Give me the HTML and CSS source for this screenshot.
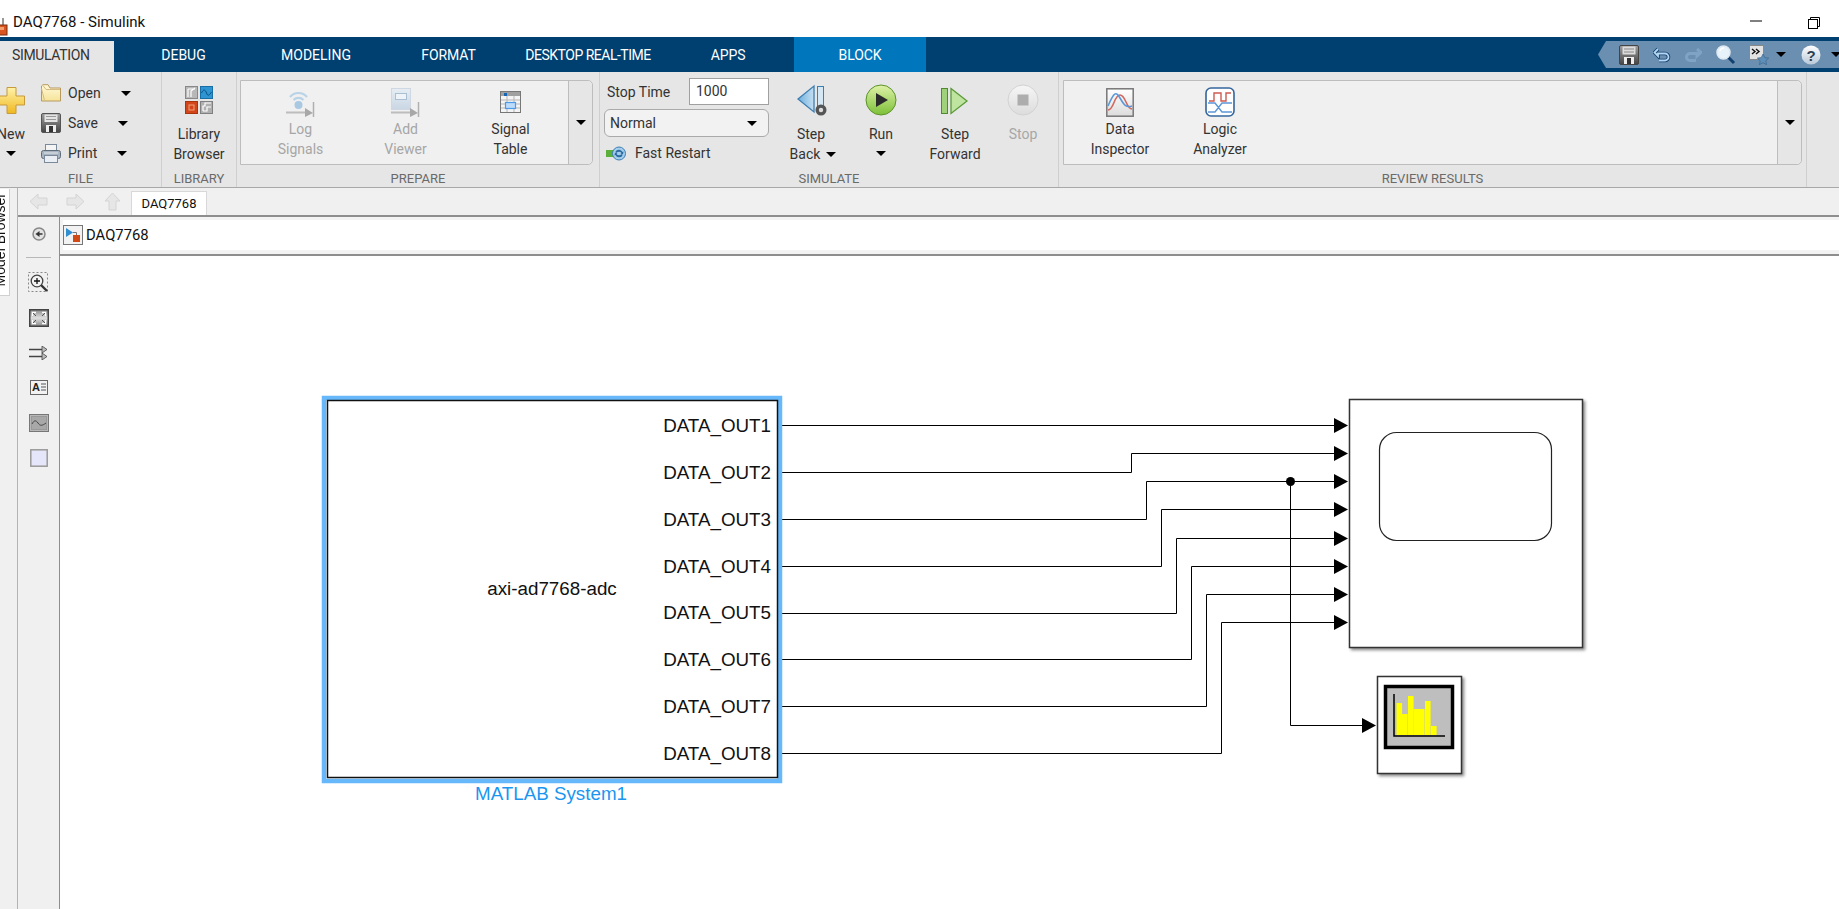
FILE: index.html
```html
<!DOCTYPE html>
<html lang="en">
<head>
<meta charset="utf-8">
<title>DAQ7768 - Simulink</title>
<link rel="stylesheet" href="styles.css">
</head>
<body>
<svg class="defs" width="0" height="0" aria-hidden="true">
  <defs>
    <linearGradient id="gold" x1="0" y1="0" x2="0" y2="1"><stop offset="0" stop-color="#fff3a8"/><stop offset="1" stop-color="#f0b820"/></linearGradient>
    <linearGradient id="folder" x1="0" y1="0" x2="0" y2="1"><stop offset="0" stop-color="#fff8d8"/><stop offset="1" stop-color="#f6e49a"/></linearGradient>
    <linearGradient id="disk" x1="0" y1="0" x2="0" y2="1"><stop offset="0" stop-color="#a0a0a0"/><stop offset="1" stop-color="#454545"/></linearGradient>
    <linearGradient id="green" x1="0" y1="0" x2="0" y2="1"><stop offset="0" stop-color="#dff2a8"/><stop offset="1" stop-color="#7cc038"/></linearGradient>
    <linearGradient id="silver" x1="0" y1="0" x2="0" y2="1"><stop offset="0" stop-color="#f6f6f6"/><stop offset="1" stop-color="#dcdcdc"/></linearGradient>
    <linearGradient id="blue" x1="0" y1="0" x2="1" y2="0"><stop offset="0" stop-color="#6fb0de"/><stop offset="1" stop-color="#c6e0f2"/></linearGradient>
    <linearGradient id="pale" x1="0" y1="0" x2="0" y2="1"><stop offset="0" stop-color="#e6edf4"/><stop offset="1" stop-color="#c9d6e3"/></linearGradient>
    <linearGradient id="chart" x1="0" y1="0" x2="0" y2="1"><stop offset="0" stop-color="#ffffff"/><stop offset="1" stop-color="#dcdcdc"/></linearGradient>
    <linearGradient id="helpfill" x1="0" y1="0" x2="0" y2="1"><stop offset="0" stop-color="#ffffff"/><stop offset="1" stop-color="#b9c8d8"/></linearGradient>
    <linearGradient id="fit" x1="0" y1="0" x2="0" y2="1"><stop offset="0" stop-color="#8a8a8a"/><stop offset=".5" stop-color="#e0e0e0"/><stop offset="1" stop-color="#8a8a8a"/></linearGradient>
  </defs>
</svg>

<header class="titlebar">
  <svg class="app-icon" width="8" height="18" viewBox="0 0 8 18"><path d="M3 0v8" stroke="#333" stroke-width="1" fill="none"/><rect x="-4" y="7" width="11" height="10" fill="#d9541e" stroke="#7a2d0c"/><rect x="-2" y="9" width="6" height="3" fill="#f2a070"/></svg>
  <span class="title-text">DAQ7768 - Simulink</span>
  <svg class="win-min" width="12" height="2" viewBox="0 0 12 2"><path d="M0 1h12" stroke="#000" stroke-width="1"/></svg>
  <svg class="win-restore" width="12" height="12" viewBox="0 0 12 12"><path d="M2.500 2.500V.5h9v9h-2" fill="none" stroke="#000"/><rect x=".5" y="2.500" width="9" height="9" fill="#fff" stroke="#000"/></svg>
</header>

<nav class="tabbar">
  <span class="tab tab-sim">SIMULATION</span>
  <span class="tab tab-debug">DEBUG</span>
  <span class="tab tab-model">MODELING</span>
  <span class="tab tab-format">FORMAT</span>
  <span class="tab tab-desk">DESKTOP REAL-TIME</span>
  <span class="tab tab-apps">APPS</span>
  <span class="tab tab-block">BLOCK</span>
  <div class="quick">
    <svg width="20" height="20" viewBox="0 0 20 20"><rect x=".5" y=".5" width="19" height="19" rx="1.500" fill="url(#disk)" stroke="#444"/><rect x="3.500" y="1.500" width="13" height="8" fill="#dcdcdc"/><path d="M5 4h10M5 7h10" stroke="#888"/><rect x="5" y="12" width="10" height="7" fill="#eee"/><rect x="8" y="13" width="4" height="6" fill="#333"/></svg>
    <svg class="q14" width="18" height="18" viewBox="0 0 18 18"><path d="M5 3 1.500 6.500 5 10V7.500h7a3.500 3.500 0 0 1 0 7H6" fill="none" stroke="#12406e" stroke-width="3.600"/><path d="M5 3 1.500 6.500 5 10V7.500h7a3.500 3.500 0 0 1 0 7H6" fill="none" stroke="#b4d6f0" stroke-width="1.800"/></svg>
    <svg class="q13" width="18" height="18" viewBox="0 0 18 18"><path d="M13 3l4 3.500L13 10V7.500H6a3.500 3.500 0 0 0 0 7h6" fill="none" stroke="#7fa3c5" stroke-width="3"/></svg>
    <svg class="q14" width="20" height="20" viewBox="0 0 20 20"><path d="M11 11l7 7" stroke="#123f6e" stroke-width="3"/><circle cx="7.500" cy="7.500" r="6.500" fill="#e8f2fa" stroke="#dfe9f2" stroke-width="1.500"/><path d="M4 6a4 4 0 0 1 4-3" stroke="#fff" stroke-width="1.500" fill="none"/></svg>
    <svg class="q13" width="20" height="20" viewBox="0 0 20 20"><rect x=".5" y=".5" width="14" height="14" fill="#e3e3e3" stroke="#888"/><path d="M3 4l3 2.500L3 9M7 4l3 2.500L7 9" fill="none" stroke="#111" stroke-width="1.400"/><path d="M14 9l1.800 3.600 3.900.5-2.900 2.700.8 3.900-3.600-2-3.600 2 .8-3.900-2.900-2.700 3.900-.5z" fill="#5f8fb8" stroke="#34608a" stroke-width=".6"/></svg>
    <span class="caret q7"></span>
    <svg class="q15" width="20" height="20" viewBox="0 0 20 20"><circle cx="10" cy="10" r="9.500" fill="url(#helpfill)"/><text class="help-q" x="10" y="15.500" text-anchor="middle">?</text></svg>
    <span class="caret q10"></span>
  </div>
</nav>

<div class="ribbon">
  <section class="sec sec-file">
    <div class="sec-body file-body">
      <div class="btn btn-new">
        <div class="icon-lg">
          <svg width="27" height="27" viewBox="0 0 27 27"><path d="M9 .5h9v8.500h8.500v9H18v8.500H9V18H.5V9H9z" fill="url(#gold)" stroke="#c79a3a"/></svg>
        </div>
        <span class="line">New</span>
        <span class="caret caret-under"></span>
      </div>
      <div class="file-list">
        <div class="file-row">
          <svg width="20" height="18" viewBox="0 0 20 18"><path d="M.5 2V17h19V4H9L7 .7H2z" fill="url(#folder)" stroke="#b99a5e"/><path d="M.5 4.500l3 12M2 1.500l3 4h14" fill="none" stroke="#d4bc84"/></svg>
          <span>Open</span><span class="caret"></span>
        </div>
        <div class="file-row">
          <svg width="20" height="20" viewBox="0 0 20 20"><rect x=".5" y=".5" width="19" height="19" rx="1.500" fill="url(#disk)" stroke="#555"/><rect x="3.500" y="1.500" width="13" height="7.500" fill="#e4e4e4"/><path d="M5 3.500h10M5 6.500h10" stroke="#999"/><rect x="5" y="12" width="10" height="7" fill="#eee"/><rect x="8" y="13" width="4" height="6" fill="#333"/></svg>
          <span>Save</span><span class="caret"></span>
        </div>
        <div class="file-row">
          <svg width="20" height="19" viewBox="0 0 20 19"><rect x="4.500" y=".5" width="11" height="7" fill="#f4f4f4" stroke="#7a8a9a"/><rect x=".5" y="6.500" width="19" height="8" rx="2" fill="#a8b4c0" stroke="#5e6c7a"/><rect x="3.500" y="11.500" width="13" height="7" fill="#e8eef4" stroke="#7a8a9a"/><path d="M3 9h14" stroke="#e4e9ee"/></svg>
          <span>Print</span><span class="caret"></span>
        </div>
      </div>
    </div>
    <div class="sec-label">FILE</div>
  </section>

  <section class="sec sec-lib">
    <div class="sec-body">
      <div class="btn btn-lib">
        <div class="icon-lg">
          <svg width="28" height="28" viewBox="0 0 28 28">
            <rect x=".5" y=".5" width="12" height="12" fill="#b8b8b8" stroke="#888"/><path d="M3 11V3M3 3h7M6 11V5l4-3" fill="none" stroke="#fff" stroke-width="1.200"/>
            <rect x="15.500" y=".5" width="12" height="12" fill="#2f95d2" stroke="#1a6ea6"/><path d="M16.500 7c2-4 3.500-4 5 0s3 2 5-1" fill="none" stroke="#0c4f80"/>
            <rect x=".5" y="15.500" width="12" height="12" fill="#d2461a" stroke="#a83410"/><rect x="4" y="19" width="5" height="5" fill="none" stroke="#f0a080"/>
            <rect x="15.500" y="15.500" width="12" height="12" fill="#b0b0b0" stroke="#808080"/><path d="M18 25v-5h2v-3h6M18 25h4v-4h4" fill="none" stroke="#fff" stroke-width="1.200"/>
          </svg>
        </div>
        <span class="line">Library</span>
        <span class="line">Browser</span>
      </div>
    </div>
    <div class="sec-label">LIBRARY</div>
  </section>

  <section class="sec sec-prep">
    <div class="sec-body">
      <div class="group group-prep">
        <div class="group-items">
          <div class="btn btn-wide off">
            <div class="icon-sm">
              <svg width="30" height="29" viewBox="0 0 30 29"><path d="M4 9a11 11 0 0 1 17 0M7.500 12a7 7 0 0 1 10 0" fill="none" stroke="#b8d3e8" stroke-width="2.200"/><circle cx="12.500" cy="17" r="4" fill="#a9c8e2"/><path d="M0 24.500h24" stroke="#bdbdbd" stroke-width="2"/><path d="M19 20l8 5-8 4z" fill="#a8a8a8"/><path d="M27.500 14v15" stroke="#b0b0b0" stroke-width="1.500"/></svg>
            </div>
            <span class="line">Log</span><span class="line">Signals</span>
          </div>
          <div class="btn btn-wide off">
            <div class="icon-sm">
              <svg width="30" height="29" viewBox="0 0 30 29"><rect x=".5" y=".5" width="19" height="21" fill="url(#pale)" stroke="#cfd8e2"/><rect x="4.500" y="5.500" width="11" height="6" fill="#eef3f8" stroke="#a9c0d4"/><path d="M0 24.500h24" stroke="#bdbdbd" stroke-width="2"/><path d="M19 20l8 5-8 4z" fill="#a8a8a8"/><path d="M27.500 14v15" stroke="#b0b0b0" stroke-width="1.500"/></svg>
            </div>
            <span class="line">Add</span><span class="line">Viewer</span>
          </div>
          <div class="btn btn-wide">
            <div class="icon-sm icon-table">
              <svg width="21" height="22" viewBox="0 0 21 22"><rect x=".5" y=".5" width="20" height="21" fill="#f4f4f4" stroke="#777"/><rect x="1" y="1" width="19" height="4" fill="#a0a0a0"/><rect x="4" y="2" width="3" height="3" fill="#1466b4"/><path d="M1 9h19M1 13h19M1 17h19M7 5v16M14 5v16" stroke="#b5b5b5"/><rect x="5.500" y="11.500" width="10" height="6" fill="#bcdcfa" stroke="#4f9ae6" stroke-width="1.200"/></svg>
            </div>
            <span class="line">Signal</span><span class="line">Table</span>
          </div>
        </div>
        <div class="group-more"><span class="caret"></span></div>
      </div>
    </div>
    <div class="sec-label">PREPARE</div>
  </section>

  <section class="sec sec-simu">
    <div class="sec-body simu-body">
      <div class="simu-form">
        <div class="stop-row"><span>Stop Time</span><span class="stop-input">1000</span></div>
        <div class="mode-select"><span>Normal</span><span class="caret"></span></div>
        <div class="restart-row">
          <svg width="21" height="15" viewBox="0 0 21 15"><rect x="0" y="4" width="7" height="7" fill="#5cb03a"/><circle cx="13" cy="7.500" r="6.500" fill="#a5cdec" stroke="#3b7fb5"/><path d="M9.500 5.500a4 4 0 0 1 7 .5l1-.5-.5 3-2.500-1 1-.5a3 3 0 0 0-5 0zM16.500 9.500a4 4 0 0 1-7-.5l-1 .5.500-3 2.500 1-1 .5a3 3 0 0 0 5 0z" fill="#2a6a9e"/></svg>
          <span>Fast Restart</span>
        </div>
      </div>
      <div class="btn btn-back">
        <div class="icon-run">
          <svg width="36" height="32" viewBox="0 0 36 32"><path d="M5 15 21 2v26z" fill="url(#blue)" stroke="#3f7fb0" stroke-width="1.300"/><rect x="24.500" y="2.500" width="6" height="21" fill="#d4e7f5" stroke="#3f7fb0"/><circle cx="28" cy="26" r="5.500" fill="#555"/><circle cx="28" cy="26" r="2.200" fill="#ddd"/></svg>
        </div>
        <span class="line">Step</span>
        <span class="line back-line">Back <span class="caret caret-inline"></span></span>
      </div>
      <div class="btn btn-run">
        <div class="icon-run">
          <svg width="32" height="32" viewBox="0 0 32 32"><circle cx="16" cy="16" r="15" fill="url(#green)" stroke="#5c9228"/><path d="M11 9l12 7-12 7z" fill="#2b2b2b"/></svg>
        </div>
        <span class="line">Run</span>
        <span class="caret caret-under-run"></span>
      </div>
      <div class="btn btn-fwd">
        <div class="icon-run">
          <svg width="28" height="32" viewBox="0 0 28 32"><rect x=".5" y="4.500" width="6" height="25" fill="#9ed17a" stroke="#4f8a30"/><path d="M10 4.500 26 17 10 29.500z" fill="#bfe4a0" stroke="#5c9a3a" stroke-width="1.300"/></svg>
        </div>
        <span class="line">Step</span><span class="line">Forward</span>
      </div>
      <div class="btn btn-stop off">
        <div class="icon-run">
          <svg width="32" height="32" viewBox="0 0 32 32"><circle cx="16" cy="16" r="15" fill="url(#silver)" stroke="#d2d2d2"/><rect x="10.500" y="10.500" width="11" height="11" fill="#adadad"/></svg>
        </div>
        <span class="line">Stop</span>
      </div>
    </div>
    <div class="sec-label">SIMULATE</div>
  </section>

  <section class="sec sec-rev">
    <div class="sec-body">
      <div class="group group-rev">
        <div class="group-items">
          <div class="btn btn-wide100">
            <div class="icon-sm">
              <svg width="28" height="29" viewBox="0 0 28 29"><rect x=".8" y=".8" width="26.400" height="27.400" fill="url(#chart)" stroke="#777" stroke-width="1.500"/><path d="M2 21c6 0 6-15 12-15s6 14 12 14" transform="translate(0 1)" fill="none" stroke="#d2685f" stroke-width="1.600"/><path d="M2 18c6-14 8-15 12-8s6 10 12 8" fill="none" stroke="#5b97d8" stroke-width="1.600"/></svg>
            </div>
            <span class="line">Data</span><span class="line">Inspector</span>
          </div>
          <div class="btn btn-wide100">
            <div class="icon-sm">
              <svg width="30" height="30" viewBox="0 0 30 30"><rect x="1" y="1" width="28" height="28" rx="5" fill="#fff" stroke="#34659c" stroke-width="1.600"/><path d="M4 13h5V5h7v8h5V5h5" fill="none" stroke="#cf5a52" stroke-width="1.400" transform="translate(0 1)"/><path d="M3 16h7l7 9h10M3 25h7l7-9h10" fill="none" stroke="#5b97d8" stroke-width="1.400"/></svg>
            </div>
            <span class="line">Logic</span><span class="line">Analyzer</span>
          </div>
        </div>
        <div class="group-more"><span class="caret"></span></div>
      </div>
    </div>
    <div class="sec-label">REVIEW RESULTS</div>
  </section>
</div>

<div class="workspace">
  <aside class="rail">
    <div class="rail-tab"><span>Model Browser</span></div>
  </aside>
  <div class="editor">
    <div class="doc-tabs">
      <svg width="19" height="19" viewBox="0 0 19 19"><path d="M1 9.500 9 2v4h9v7H9v4z" fill="#e6e6e6" stroke="#d4d4d4"/></svg>
      <svg width="19" height="19" viewBox="0 0 19 19"><path d="M18 9.500 10 2v4H1v7h9v4z" fill="#e6e6e6" stroke="#d4d4d4"/></svg>
      <svg width="19" height="19" viewBox="0 0 19 19"><path d="M9.500 1 2 9h4v9h7V9h4z" fill="#e6e6e6" stroke="#d4d4d4"/></svg>
      <div class="doc-tab">DAQ7768</div>
    </div>
    <div class="editor-main">
      <div class="tools">
        <div class="tool tool-first">
          <svg width="14" height="14" viewBox="0 0 14 14"><circle cx="7" cy="7" r="6" fill="#e2e2e2" stroke="#888" stroke-width="1.500"/><path d="M3.500 7 7.500 4v6z" fill="#333"/><path d="M7 7h3.500" stroke="#333" stroke-width="1.500"/></svg>
        </div>
        <div class="tool-sep"></div>
        <div class="tool">
          <svg width="21" height="21" viewBox="0 0 21 21"><rect x=".5" y=".5" width="19" height="19" fill="none" stroke="#888" stroke-dasharray="2 2"/><path d="M12.500 12.500l6.500 6.500" stroke="#333" stroke-width="2.400"/><circle cx="9" cy="9" r="5.800" fill="#f4f4f4" stroke="#444" stroke-width="1.300"/><path d="M6 9h6M9 6v6" stroke="#111" stroke-width="1.300"/></svg>
        </div>
        <div class="tool">
          <svg width="20" height="18" viewBox="0 0 20 18"><rect x=".75" y=".75" width="18.500" height="16.500" fill="url(#fit)" stroke="#444" stroke-width="1.500"/><path d="M3.500 7V3.500H7M13 3.500h3.500V7M3.500 11v3.500H7M13 14.500h3.500V11" fill="none" stroke="#fff" stroke-width="1.300"/><path d="M4 4l3 3M16 4l-3 3M4 14l3-3M16 14l-3-3" stroke="#555"/></svg>
        </div>
        <div class="tool">
          <svg width="20" height="14" viewBox="0 0 20 14"><path d="M0 3.500h15M0 10.500h15" stroke="#444" stroke-width="1.400"/><path d="M13 0l5 3.500-5 3.500zM13 7l5 3.500-5 3.500z" fill="#bbb" stroke="#444" stroke-width=".8"/></svg>
        </div>
        <div class="tool">
          <svg width="18" height="15" viewBox="0 0 18 15"><rect x=".5" y=".5" width="17" height="14" fill="#f2f2f2" stroke="#666"/><text class="tool-a" x="2" y="11">A</text><path d="M11 4h5M11 7h5M11 10h5" stroke="#555"/></svg>
        </div>
        <div class="tool">
          <svg width="20" height="18" viewBox="0 0 20 18"><rect x=".5" y=".5" width="19" height="17" fill="#b8b8b8" stroke="#777"/><rect x="2.500" y="2.500" width="15" height="13" fill="#a8a8a8" stroke="#999"/><path d="M3 10c2-4 4-4 6-1s4 3 8 0" fill="none" stroke="#444"/></svg>
        </div>
        <div class="tool">
          <svg width="18" height="18" viewBox="0 0 18 18"><rect x=".8" y=".8" width="16.400" height="16.400" fill="#e6e6fa" stroke="#999" stroke-width="1.500"/></svg>
        </div>
      </div>
      <div class="content">
        <div class="crumbbar">
          <div class="crumb">
            <svg width="20" height="20" viewBox="0 0 20 20"><rect x=".5" y=".5" width="19" height="19" fill="#f2f2f2" stroke="#777"/><path d="M3 3l7 4.500L3 12z" fill="#2f8fd0"/><rect x="10" y="10" width="7" height="7" fill="#d04a16"/><path d="M10 7.500h3.500V10" fill="none" stroke="#777"/></svg>
            <span>DAQ7768</span>
          </div>
        </div>
        <div class="canvas">
          <svg class="diagram" width="1779" height="653" viewBox="60 256 1779 653">
            <g class="wires">
              <path d="M779 425.500H1336"/>
              <path d="M779 472.500H1131.500V453.500H1336"/>
              <path d="M779 519.500H1146.500V481.500H1336"/>
              <path d="M779 566.500H1161.500V509.500H1336"/>
              <path d="M779 613.500H1176.500V538.500H1336"/>
              <path d="M779 659.500H1191.500V566.500H1336"/>
              <path d="M779 706.500H1206.500V594.500H1336"/>
              <path d="M779 753.500H1221.500V622.500H1336"/>
              <path d="M1290.500 481.500V725.500H1364"/>
            </g>
            <circle cx="1290.500" cy="481.500" r="4.500"/>
            <g>
              <path d="M1334 418l14 7.500-14 7.500z"/>
              <path d="M1334 446l14 7.500-14 7.500z"/>
              <path d="M1334 474l14 7.500-14 7.500z"/>
              <path d="M1334 502l14 7.500-14 7.500z"/>
              <path d="M1334 531l14 7.500-14 7.500z"/>
              <path d="M1334 559l14 7.500-14 7.500z"/>
              <path d="M1334 587l14 7.500-14 7.500z"/>
              <path d="M1334 615l14 7.500-14 7.500z"/>
              <path d="M1362 718l14 7.500-14 7.500z"/>
            </g>

            <rect class="select-ring" x="324" y="398" width="456" height="383"/>
            <rect class="block-frame" x="327.500" y="400.500" width="450" height="377"/>
            <g class="port-text">
              <text x="771" y="432">DATA_OUT1</text>
              <text x="771" y="479">DATA_OUT2</text>
              <text x="771" y="526">DATA_OUT3</text>
              <text x="771" y="573">DATA_OUT4</text>
              <text x="771" y="619">DATA_OUT5</text>
              <text x="771" y="666">DATA_OUT6</text>
              <text x="771" y="713">DATA_OUT7</text>
              <text x="771" y="760">DATA_OUT8</text>
            </g>
            <text class="block-text" x="552" y="595">axi-ad7768-adc</text>
            <text class="block-name" x="551" y="800">MATLAB System1</text>

            <rect class="scope" x="1349.500" y="399.500" width="233" height="248"/>
            <rect class="scope-screen" x="1379.500" y="432.500" width="172" height="108" rx="17"/>

            <rect class="scope" x="1377.500" y="676.500" width="84" height="97"/>
            <rect class="hist-screen" x="1385.500" y="686.500" width="67" height="61"/>
            <g class="hist-bars">
              <rect x="1396.500" y="703" width="5.600" height="32"/>
              <rect x="1402" y="714" width="5.600" height="21"/>
              <rect x="1408" y="696" width="5.600" height="39"/>
              <rect x="1413.500" y="709" width="5.600" height="26"/>
              <rect x="1419" y="709" width="5.600" height="26"/>
              <rect x="1425" y="701" width="5.600" height="34"/>
              <rect x="1431" y="726" width="5.600" height="9"/>
            </g>
            <path class="hist-axis" d="M1394 694V736H1445"/>
          </svg>
        </div>
      </div>
    </div>
  </div>
</div>
</body>
</html>
```

FILE: styles.css
```css
* { box-sizing: border-box; }
html, body { margin: 0; height: 100%; }
body {
  width: 1839px;
  height: 909px;
  overflow: hidden;
  display: flex;
  flex-direction: column;
  background: #f0f0f0;
  font-family: Roboto, "Liberation Sans", sans-serif;
  font-size: 14px;
  color: #333;
}
svg { display: block; flex: none; }
.defs { position: absolute; }

/* title bar */
.titlebar {
  height: 37px;
  flex: none;
  background: #fff;
  display: flex;
  align-items: center;
  padding-top: 8px;
}
.app-icon { margin-top: 8px; }
.title-text { margin-left: 5px; color: #111; font-size: 15px; margin-top: -1px; }
.win-min { margin-left: auto; margin-top: -3px; }
.win-restore { margin-left: 46px; margin-right: 19px; }

/* tab strip */
.tabbar {
  height: 35px;
  flex: none;
  background: #004071;
  display: flex;
  color: #fff;
  overflow: hidden;
}
.tab { display: flex; align-items: center; justify-content: center; height: 100%; }
.tab-sim {
  width: 114px;
  height: 31px;
  margin-top: 4px;
  background: #e6e6e6;
  color: #333;
  justify-content: flex-start;
  padding: 0 0 3px 12px;
  letter-spacing: -.35px;
}
.tab-debug { width: 139px; }
.tab-model { width: 126px; }
.tab-format { width: 139px; letter-spacing: -.1px; }
.tab-desk { width: 140px; letter-spacing: -.5px; }
.tab-apps { width: 136px; padding-left: 4px; letter-spacing: -.1px; }
.tab-block { width: 132px; background: #0077bd; letter-spacing: -.1px; }
.quick {
  margin-left: auto;
  margin-top: 4px;
  width: 241px;
  height: 27px;
  background: #6b8fb1;
  clip-path: polygon(0 50%, 8px 0, 100% 0, 100% 100%, 8px 100%);
  display: flex;
  align-items: center;
  padding-left: 21px;
  overflow: hidden;
}
.q13 { margin-left: 13px; }
.q14 { margin-left: 14px; }
.q7 { margin-left: 7px; }
.q15 { margin-left: 15px; }
.q10 { margin-left: 10px; }
.help-q { font: bold 15px "Liberation Sans", sans-serif; fill: #2d3f52; }

.caret {
  display: inline-block;
  flex: none;
  width: 0;
  height: 0;
  border-left: 5.5px solid transparent;
  border-right: 5.5px solid transparent;
  border-top: 5.5px solid #000;
}

/* ribbon */
.ribbon {
  height: 116px;
  flex: none;
  background: #e6e6e6;
  border-bottom: 1px solid #a8a8a8;
  display: flex;
}
.sec {
  flex: none;
  border-right: 1px solid #cfcfcf;
  display: flex;
  flex-direction: column;
}
.sec-body { height: 92px; flex: none; display: flex; }
.sec-label {
  flex: 1;
  text-align: center;
  font-size: 13px;
  line-height: 15px;
  padding-top: 7px;
  color: #6a6a6a;
}
.sec-file { width: 162px; }
.sec-lib { width: 75px; }
.sec-prep { width: 363px; }
.sec-simu { width: 459px; }
.sec-rev { width: 748px; }

.btn {
  flex: none;
  display: flex;
  flex-direction: column;
  align-items: center;
  color: #333;
}
.btn.off { color: #a6a6a6; }
.line { line-height: 20px; white-space: nowrap; }
.icon-lg { height: 52px; flex: none; display: flex; align-items: flex-end; padding-bottom: 10px; }
.icon-run { height: 52px; flex: none; display: flex; align-items: flex-end; padding-bottom: 8px; }
.icon-sm { height: 38px; flex: none; display: flex; align-items: flex-end; padding-bottom: 2px; }
.icon-table { padding-bottom: 6px; }

.btn-new { width: 28px; margin-left: -3px; }
.caret-under { margin-top: 7px; }
.file-list { margin-left: 16px; padding-top: 6px; display: flex; flex-direction: column; }
.file-row { height: 30px; flex: none; display: flex; align-items: center; }
.file-row > span:first-of-type { margin-left: 7px; }
.file-row > .caret { margin-left: 20px; }
.btn-lib { width: 100%; }

.group {
  display: flex;
  height: 85px;
  margin-top: 8px;
  background: #f0f0f0;
  border: 1px solid #bdbdbd;
  border-radius: 0 5px 5px 0;
}
.group-items { flex: 1; display: flex; }
.group-more {
  width: 24px;
  border-left: 1px solid #bdbdbd;
  background: #e6e6e6;
  border-radius: 0 5px 5px 0;
  display: flex;
  align-items: center;
  justify-content: center;
  padding-bottom: 1px;
}
.group-prep { width: 353px; margin-left: 3px; padding-left: 7px; }
.group-rev { width: 739px; margin-left: 4px; padding-left: 6px; }
.btn-wide { width: 105px; }
.btn-wide100 { width: 100px; }

.simu-body { padding-left: 4px; }
.simu-form { width: 165px; margin-right: 7px; padding-top: 6px; display: flex; flex-direction: column; }
.stop-row { height: 27px; flex: none; display: flex; align-items: center; padding-left: 3px; }
.stop-input {
  margin-left: auto;
  width: 80px;
  height: 27px;
  line-height: 25px;
  background: #fff;
  border: 1px solid #a0a0a0;
  padding-left: 6px;
}
.mode-select {
  margin-top: 4px;
  height: 28px;
  flex: none;
  display: flex;
  align-items: center;
  justify-content: space-between;
  padding: 0 11px 0 5px;
  border: 1px solid #aaa;
  border-radius: 6px;
  background: #f2f2f2;
}
.restart-row { height: 32px; flex: none; display: flex; align-items: center; padding-left: 2px; }
.restart-row span { margin-left: 8px; }
.btn-back { width: 70px; }
.btn-run { width: 70px; }
.btn-fwd { width: 78px; }
.btn-stop { width: 58px; }
.back-line { padding-left: 4px; display: flex; align-items: center; gap: 6px; }
.caret-under-run { margin-top: 7px; }

/* workspace */
.workspace { flex: 1; min-height: 0; display: flex; }
.rail {
  width: 18px;
  flex: none;
  border-right: 1px solid #b4b4b4;
  background: #f0f0f0;
}
.rail-tab {
  width: 10px;
  height: 107px;
  margin-top: 1px;
  background: #fff;
  border-right: 1px solid #d0d0d0;
  border-bottom: 1px solid #d0d0d0;
  overflow: hidden;
  display: flex;
  justify-content: flex-start;
  align-items: flex-end;
}
.rail-tab span {
  flex: none;
  writing-mode: vertical-rl;
  transform: rotate(180deg);
  font-family: "Liberation Sans", sans-serif;
  font-size: 14px;
  line-height: 16px;
  width: 16px;
  margin-left: -8px;
  margin-bottom: 9px;
  color: #111;
  white-space: nowrap;
}
.editor { flex: 1; min-width: 0; display: flex; flex-direction: column; }
.doc-tabs {
  height: 29px;
  flex: none;
  display: flex;
  align-items: center;
  gap: 18px;
  padding-left: 11px;
  border-bottom: 2px solid #8e8e8e;
}
.doc-tab {
  align-self: flex-end;
  width: 76px;
  height: 24px;
  margin-left: -9px;
  background: #fff;
  border: 1px solid #d8d8d8;
  border-bottom: 0;
  font-size: 13px;
  line-height: 24px;
  text-align: center;
  color: #111;
}
.editor-main { flex: 1; min-height: 0; display: flex; }
.tools {
  width: 42px;
  flex: none;
  border-right: 1px solid #8e8e8e;
  display: flex;
  flex-direction: column;
  align-items: center;
  background: #f0f0f0;
}
.tool { height: 35px; flex: none; display: flex; align-items: center; justify-content: center; }
.tool-first { height: 34px; }
.tool-sep { width: 25px; height: 1px; margin: 6px 0 7px; background: #b8b8b8; flex: none; }
.tool-a { font: bold 11px "Liberation Sans", sans-serif; fill: #222; }
.content { flex: 1; min-width: 0; display: flex; flex-direction: column; }
.crumbbar {
  height: 39px;
  flex: none;
  padding: 3px 0 4px 3px;
  background: #f3f3f3;
  border-bottom: 2px solid #8e8e8e;
}
.crumb {
  height: 30px;
  background: #fff;
  display: flex;
  align-items: center;
  color: #111;
  font-size: 14.800px;
}
.crumb span { margin-left: 3px; }
.canvas { flex: 1; min-height: 0; background: #fff; overflow: hidden; }

/* diagram */
.diagram text { font-family: "Liberation Sans", sans-serif; font-size: 18.800px; fill: #111; }
.wires path { fill: none; stroke: #000; stroke-width: 1; }
.select-ring { fill: none; stroke: #66b8fb; stroke-width: 4.500; }
.block-frame { fill: #fff; stroke: #111; stroke-width: 1.500; }
.port-text text { text-anchor: end; }
.diagram .block-text { text-anchor: middle; }
.diagram .block-name { text-anchor: middle; fill: #1a96f0; }
.scope {
  fill: #fff;
  stroke: #333;
  stroke-width: 1.500;
  filter: drop-shadow(2px 2px 1.500px rgba(0, 0, 0, .45));
}
.scope-screen { fill: #fff; stroke: #222; stroke-width: 1.200; }
.hist-screen { fill: #bebebe; stroke: #000; stroke-width: 3.500; }
.hist-bars rect { fill: #ffff00; }
.hist-axis { fill: none; stroke: #000; stroke-width: 1.500; }
```
